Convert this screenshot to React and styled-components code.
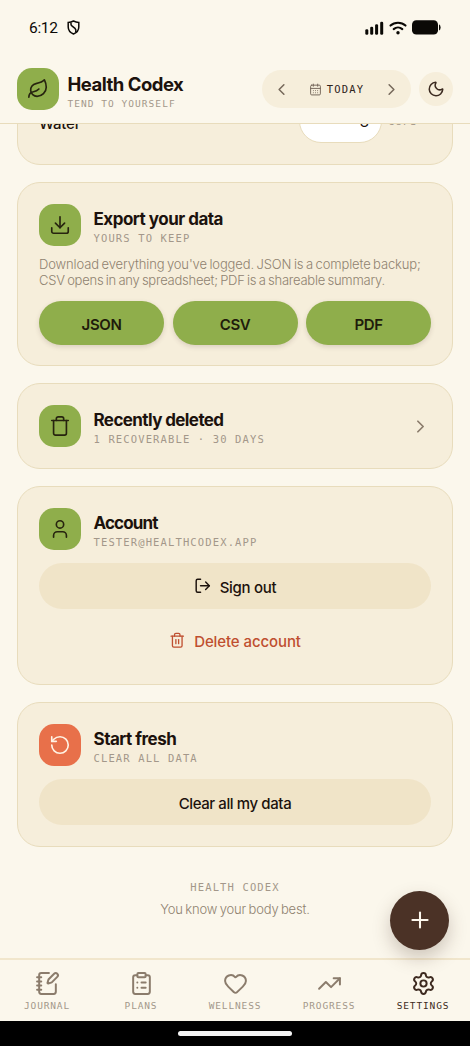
import React from 'react'
import styled, { createGlobalStyle } from 'styled-components'
import {
  Leaf,
  ChevronLeft,
  ChevronRight,
  CalendarDays,
  Moon,
  Download,
  Trash,
  Trash2,
  User,
  LogOut,
  RotateCcw,
  Plus,
  NotebookPen,
  ClipboardList,
  Heart,
  TrendingUp,
  Settings,
} from 'lucide-react'

const colors = {
  page: '#fbf7ec',
  card: '#f6eedb',
  border: '#e8dcbc',
  soft: '#f0e4c8',
  green: '#8fae4b',
  coral: '#e8704a',
  danger: '#bf4f30',
  ink: '#1c120d',
  brown: '#4b3226',
  muted: '#a3978a',
  icon: '#8b7c6c',
}

const GlobalStyle = createGlobalStyle`
  * {
    box-sizing: border-box;
  }

  body {
    margin: 0;
    background: ${colors.page};
    color: ${colors.ink};
    font-family: Inter, 'Liberation Sans', sans-serif;
  }

  button {
    border: 0;
    padding: 0;
    background: none;
    color: inherit;
    font: inherit;
  }

  svg {
    display: block;
    flex-shrink: 0;
  }
`

const Screen = styled.div`
  position: relative;
  display: flex;
  flex-direction: column;
  width: 470px;
  height: 1046px;
  overflow: hidden;
`

const StatusBar = styled.div`
  display: flex;
  align-items: center;
  height: 55px;
  padding: 0 29px;
  color: #0b0906;
`

const Time = styled.span`
  width: 38px;
  font-family: Roboto, sans-serif;
  font-size: 15.5px;
  letter-spacing: -0.3px;
  white-space: nowrap;
`

const StatusIcons = styled.div`
  display: flex;
  align-items: center;
  gap: 5px;
  margin-left: auto;
`

const Header = styled.header`
  display: flex;
  align-items: center;
  height: 69px;
  padding: 0 17px;
  border-bottom: 1px solid ${colors.border};
`

const Tile = styled.div`
  display: flex;
  align-items: center;
  justify-content: center;
  flex-shrink: 0;
  width: 42px;
  height: 42px;
  border-radius: 15px;
  background: ${props => props.$tone || colors.green};
  color: ${props => (props.$tone ? '#fff3e4' : '#27240f')};
`

const Mono = styled.div`
  font-family: 'DejaVu Sans Mono', monospace;
  font-size: ${props => props.$size || 10.5}px;
  letter-spacing: ${props => (props.$track === undefined ? 1.13 : props.$track)}px;
  line-height: 14px;
  color: ${props => props.$color || colors.muted};
  text-transform: uppercase;
  white-space: nowrap;
`

const Title = styled.div`
  margin-bottom: 1px;
  font-size: ${props => props.$size || 17}px;
  font-weight: 700;
  letter-spacing: ${props => props.$track || -0.5}px;
  line-height: 22px;
  white-space: nowrap;
`

const Brand = styled.div`
  margin-left: 8.5px;
  padding-top: 6px;

  ${Title} {
    margin-bottom: 2px;
  }
`

const DatePill = styled.div`
  display: flex;
  align-items: center;
  justify-content: space-between;
  width: 149px;
  height: 38px;
  margin-left: auto;
  padding: 0 10px;
  border-radius: 19px;
  background: ${colors.card};
  color: #75685a;
`

const Today = styled.div`
  display: flex;
  align-items: center;
  gap: 5px;
`

const ThemeButton = styled.button`
  display: flex;
  align-items: center;
  justify-content: center;
  width: 34px;
  height: 34px;
  margin-left: 8px;
  border-radius: 50%;
  background: ${colors.card};
  color: #3b2a20;
`

const Content = styled.main`
  display: flex;
  flex-direction: column;
  gap: 17px;
  height: 834px;
  padding: 0 17px;
  overflow: hidden;
`

const Card = styled.section`
  flex-shrink: 0;
  height: ${props => props.$height}px;
  padding: 21px;
  border: 1px solid ${colors.border};
  border-radius: 23px;
  background: ${colors.card};
`

// scrolled partly under the header
const GoalCard = styled(Card)`
  display: flex;
  align-items: flex-end;
  margin-top: -43px;
`

const GoalLabel = styled.div`
  flex: 1;
  height: 29px;
  font-size: 15px;
  font-weight: 500;
  letter-spacing: -0.2px;
  line-height: 20px;
`

const GoalInput = styled.div`
  display: flex;
  justify-content: flex-end;
  width: 83px;
  height: 44px;
  padding: 13px 12px;
  border: 1px solid ${colors.border};
  border-radius: 22px;
  background: #fff;
  font-size: 15px;
  line-height: 18px;
`

const GoalUnit = styled(Mono)`
  width: 49px;
  height: 29px;
  padding-left: 6px;
`

const CardHead = styled.div`
  display: flex;
  align-items: center;
  gap: 12.5px;
  height: 42px;
`

const HeadText = styled.div`
  flex: 1;
  padding-top: 2px;
`

const Chevron = styled.div`
  color: ${colors.icon};
`

const Description = styled.p`
  margin: 10px 0 13px;
  font-size: 13px;
  font-weight: 300;
  line-height: 16px;
  color: #8f8270;
  white-space: nowrap;
`

const Line = styled.span`
  display: block;
  letter-spacing: ${props => props.$track}px;
  word-spacing: -1px;
`

const ExportRow = styled.div`
  display: grid;
  grid-template-columns: repeat(3, 1fr);
  gap: 8.5px;
`

const ExportButton = styled.button`
  height: 44px;
  padding-top: 2px;
  border-radius: 22px;
  background: ${colors.green};
  box-shadow: 0 2px 5px rgba(75, 50, 38, 0.16);
  color: #1f1c0b;
  font-size: 15px;
  font-weight: 600;
  letter-spacing: -0.4px;
`

const WideButton = styled.button`
  display: flex;
  align-items: center;
  justify-content: center;
  gap: 8.5px;
  width: 100%;
  height: 46px;
  margin-top: ${props => props.$top || 0}px;
  border-radius: 23px;
  background: ${props => (props.$plain ? 'transparent' : colors.soft)};
  color: ${props => (props.$plain ? colors.danger : colors.ink)};
  font-size: 15px;
  font-weight: 500;
  letter-spacing: ${props => props.$track || -0.3}px;

  span {
    padding-top: 3px;
  }
`

const Footer = styled.footer`
  display: flex;
  flex-direction: column;
  align-items: center;
  gap: 6px;
  padding-top: 16px;
`

const Tagline = styled.div`
  font-size: 13px;
  font-weight: 300;
  letter-spacing: -0.17px;
  word-spacing: -1px;
  line-height: 18px;
  color: #8f8270;
`

const AddButton = styled.button`
  position: absolute;
  left: 390px;
  top: 890.5px;
  display: flex;
  align-items: center;
  justify-content: center;
  width: 59px;
  height: 59px;
  border-radius: 50%;
  background: ${colors.brown};
  box-shadow: 0 8px 18px rgba(75, 50, 38, 0.25);
  color: #fdf8ee;
`

const TabBar = styled.nav`
  display: grid;
  grid-template-columns: repeat(5, 1fr);
  height: 63px;
  border-top: 2px solid #f1e6cc;
`

const Tab = styled.div`
  display: flex;
  flex-direction: column;
  align-items: center;
  gap: 3px;
  padding-top: 11px;
  color: ${props => (props.$active ? '#3d2a20' : colors.icon)};
`

const HomeBar = styled.div`
  display: flex;
  justify-content: center;
  height: 25px;
  padding-top: 10px;
  background: #000;

  &::after {
    content: '';
    width: 114px;
    height: 5px;
    border-radius: 3px;
    background: #f4f4f4;
  }
`

const tabs = [
  { name: 'Journal', icon: NotebookPen },
  { name: 'Plans', icon: ClipboardList },
  { name: 'Wellness', icon: Heart },
  { name: 'Progress', icon: TrendingUp },
  { name: 'Settings', icon: Settings, active: true },
]

function ShieldIcon() {
  return (
    <svg width="13" height="15" viewBox="0 0 13 15" fill="none" stroke="currentColor" strokeWidth="1.5">
      <path d="M6.5 1 Q9 2.2 11.8 2.4 V7 Q11.8 11.8 6.5 14 Q1.2 11.8 1.2 7 V2.4 Q4 2.2 6.5 1Z" />
      <path d="M4 2.4 V4.4 Q4.1 5.4 5.2 6.2 L8 8.4 Q9.4 9.6 8.7 12.4" />
    </svg>
  )
}

function SignalIcon() {
  return (
    <svg width="19" height="14" viewBox="0 0 19 14" fill="currentColor">
      <rect x="0.3" y="8.3" width="3" height="5.4" rx="1.3" />
      <rect x="5.2" y="5.8" width="3" height="7.9" rx="1.3" />
      <rect x="10.1" y="3.2" width="3" height="10.5" rx="1.3" />
      <rect x="15.2" y="0.7" width="3" height="13" rx="1.3" />
    </svg>
  )
}

function WifiIcon() {
  return (
    <svg width="18" height="14" viewBox="0 0 18 14" fill="none" stroke="currentColor" strokeWidth="2.1" strokeLinecap="round">
      <path d="M1.5 4.6 C5.6 0.7 12.4 0.7 16.5 4.6" />
      <path d="M4.7 8.1 C7.2 5.9 10.8 5.9 13.3 8.1" />
      <circle cx="9" cy="11.8" r="1.7" fill="currentColor" stroke="none" />
    </svg>
  )
}

function BatteryIcon() {
  return (
    <svg width="29" height="15" viewBox="0 0 29 15" fill="currentColor">
      <rect x="0" y="0.3" width="26" height="14.2" rx="4.3" />
      <path d="M27 4.3 Q28.6 5 28.6 7.4 Q28.6 9.8 27 10.5Z" />
    </svg>
  )
}

function SectionHead({ icon: Icon, title, track, note, tone, children }) {
  return (
    <CardHead>
      <Tile $tone={tone}><Icon size={22} strokeWidth={1.8} /></Tile>
      <HeadText>
        <Title $track={track}>{title}</Title>
        <Mono>{note}</Mono>
      </HeadText>
      {children}
    </CardHead>
  )
}

export default function App() {
  return (
    <Screen>
      <GlobalStyle />
      <StatusBar>
        <Time>6:12</Time>
        <ShieldIcon />
        <StatusIcons>
          <SignalIcon />
          <WifiIcon />
          <BatteryIcon />
        </StatusIcons>
      </StatusBar>

      <Header>
        <Tile><Leaf size={22} strokeWidth={1.8} /></Tile>
        <Brand>
          <Title $size={18.5} $track={-0.5}>Health Codex</Title>
          <Mono $size={9.5} $track={1.04}>Tend to yourself</Mono>
        </Brand>
        <DatePill>
          <ChevronLeft size={19} strokeWidth={1.9} />
          <Today>
            <CalendarDays size={13} strokeWidth={1.8} />
            <Mono $color="#2f241c">Today</Mono>
          </Today>
          <ChevronRight size={19} strokeWidth={1.9} />
        </DatePill>
        <ThemeButton><Moon size={18} strokeWidth={2} /></ThemeButton>
      </Header>

      <Content>
        <GoalCard $height={84}>
          <GoalLabel>Water</GoalLabel>
          <GoalInput>8</GoalInput>
          <GoalUnit>cups</GoalUnit>
        </GoalCard>

        <Card $height={184}>
          <SectionHead icon={Download} title="Export your data" note="Yours to keep" />
          <Description>
            <Line $track={-0.12}>Download everything you've logged. JSON is a complete backup;</Line>
            <Line $track={-0.24}>CSV opens in any spreadsheet; PDF is a shareable summary.</Line>
          </Description>
          <ExportRow>
            <ExportButton>JSON</ExportButton>
            <ExportButton>CSV</ExportButton>
            <ExportButton>PDF</ExportButton>
          </ExportRow>
        </Card>

        <Card $height={86}>
          <SectionHead icon={Trash} title="Recently deleted" track={-0.6} note="1 recoverable · 30 days">
            <Chevron><ChevronRight size={21} strokeWidth={2} /></Chevron>
          </SectionHead>
        </Card>

        <Card $height={199}>
          <SectionHead icon={User} title="Account" track={-0.85} note="tester@healthcodex.app" />
          <WideButton $top={13}>
            <LogOut size={17.5} strokeWidth={2} />
            <span>Sign out</span>
          </WideButton>
          <WideButton $top={8} $track={-0.1} $plain>
            <Trash2 size={16.5} strokeWidth={1.9} />
            <span>Delete account</span>
          </WideButton>
        </Card>

        <Card $height={145}>
          <SectionHead icon={RotateCcw} title="Start fresh" note="Clear all data" tone={colors.coral} />
          <WideButton $top={13} $track={-0.4}><span>Clear all my data</span></WideButton>
        </Card>

        <Footer>
          <Mono>Health Codex</Mono>
          <Tagline>You know your body best.</Tagline>
        </Footer>
      </Content>

      <TabBar>
        {tabs.map(({ name, icon: Icon, active }) => (
          <Tab key={name} $active={active}>
            <Icon size={25} strokeWidth={1.9} />
            <Mono $size={9.5} $track={0.85} $color={active ? '#3d2a20' : undefined}>{name}</Mono>
          </Tab>
        ))}
      </TabBar>
      <HomeBar />
      <AddButton><Plus size={26} strokeWidth={1.9} /></AddButton>
    </Screen>
  )
}
